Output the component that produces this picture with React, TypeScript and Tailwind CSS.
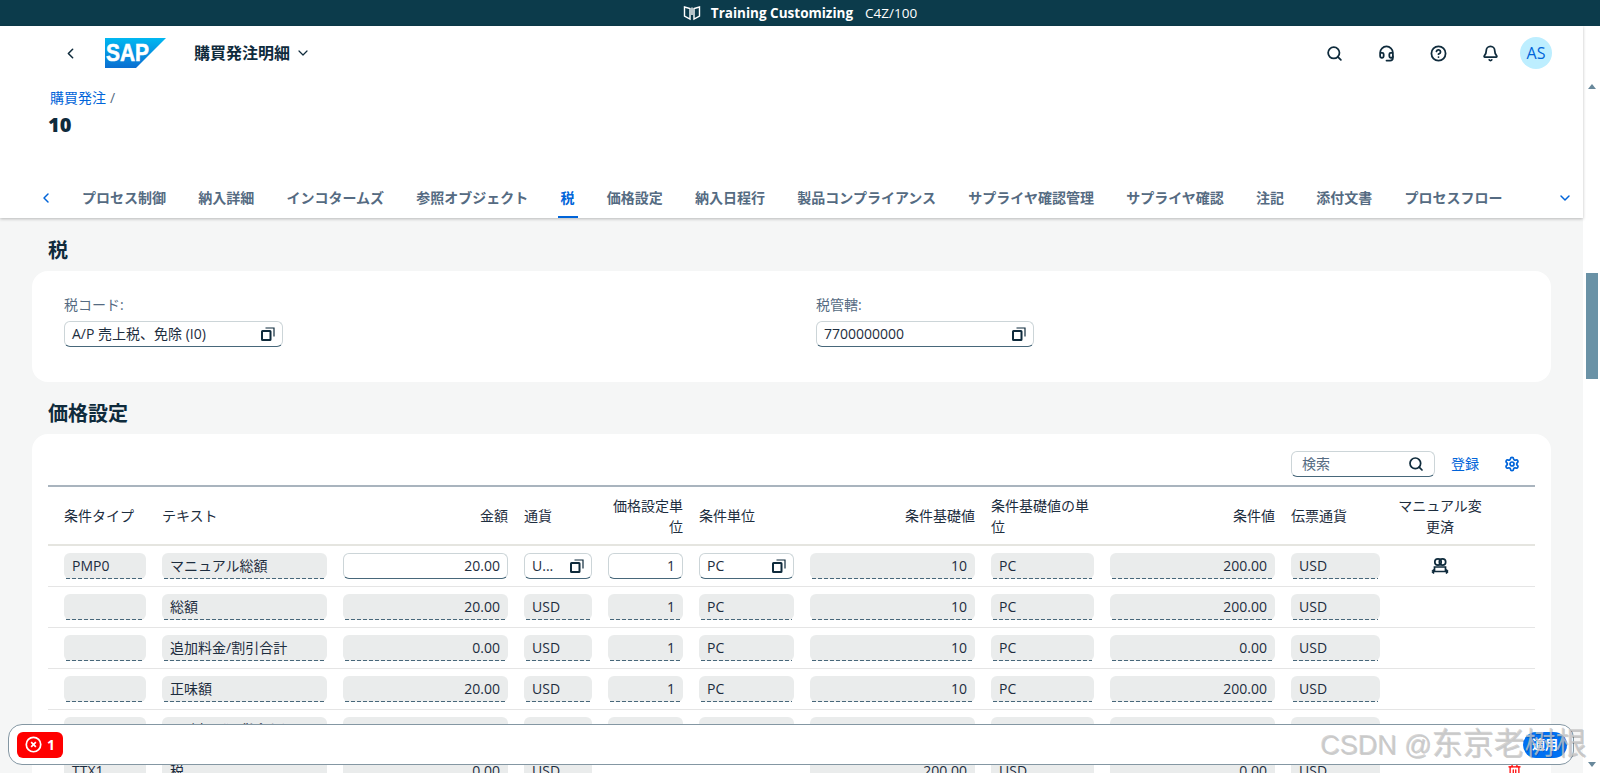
import { Bell, ChevronDown, ChevronLeft, CircleHelp, Headset, Search, Settings, Trash2 } from "lucide-react";

const FONT = "[font-family:'Open_Sans','Noto_Sans_CJK_JP',sans-serif]";
const GRID =
  "grid grid-cols-[98px_181px_181px_84px_91px_111px_181px_119px_181px_105px_147px] pl-2";

const TABS = [
  "プロセス制御",
  "納入詳細",
  "インコタームズ",
  "参照オブジェクト",
  "税",
  "価格設定",
  "納入日程行",
  "製品コンプライアンス",
  "サプライヤ確認管理",
  "サプライヤ確認",
  "注記",
  "添付文書",
  "プロセスフロー",
];

const HEADERS = [
  { label: "条件タイプ", cls: "" },
  { label: "テキスト", cls: "" },
  { label: "金額", cls: "justify-end text-right" },
  { label: "通貨", cls: "" },
  { label: "価格設定単位", cls: "justify-end text-right" },
  { label: "条件単位", cls: "" },
  { label: "条件基礎値", cls: "justify-end text-right" },
  { label: "条件基礎値の単位", cls: "" },
  { label: "条件値", cls: "justify-end text-right" },
  { label: "伝票通貨", cls: "" },
];

const ROWS = [
  ["", "総額", "20.00", "USD", "1", "PC", "10", "PC", "200.00", "USD"],
  ["", "追加料金/割引合計", "0.00", "USD", "1", "PC", "10", "PC", "0.00", "USD"],
  ["", "正味額", "20.00", "USD", "1", "PC", "10", "PC", "200.00", "USD"],
  ["", "正味額（通貨含む）", "20.00", "USD", "1", "PC", "10", "PC", "200.00", "USD"],
  ["TTX1", "税", "0.00", "USD", null, null, "200.00", "USD", "0.00", "USD"],
];

function ValueHelpIcon() {
  return (
    <svg width="14" height="14" viewBox="0 0 14 14" fill="none" className="shrink-0 text-[#0f2b3c]">
      <rect x="1" y="4" width="8.5" height="9" rx="0.5" stroke="currentColor" strokeWidth="2" />
      <path d="M4.5 1H13V9.5" stroke="currentColor" strokeWidth="1.2" />
    </svg>
  );
}

function ReadOnlyCell({ value, right }: { value: string; right?: boolean }) {
  return (
    <div className="flex h-[26px] flex-col rounded-md bg-[#eaecec] text-sm text-[#1d2d3e]">
      <div className={`flex flex-1 items-center px-2 ${right ? "justify-end" : ""}`}>{value}</div>
      <div className="mx-0.5 h-px bg-[repeating-linear-gradient(90deg,#47677a_0_4px,transparent_4px_6px)]" />
    </div>
  );
}

function InputCell({ value, right, help }: { value: string; right?: boolean; help?: boolean }) {
  return (
    <div
      className={`flex h-[26px] items-center justify-between gap-1 rounded-md border border-[#ccd5d8] border-b-[#47677a] bg-white px-[7px] text-sm text-[#1d2d3e] ${
        right ? "text-right" : ""
      }`}
    >
      <span className="min-w-0 flex-1">{value}</span>
      {help && <ValueHelpIcon />}
    </div>
  );
}

function Field({ label, value, width }: { label: string; value: string; width: string }) {
  return (
    <div className={width}>
      <div className="mb-[6px] h-[20px] text-sm leading-5 text-[#556b82]">{label}</div>
      <InputCell value={value} help />
    </div>
  );
}

function SapLogo() {
  return (
    <svg width="61" height="30" viewBox="0 0 61 30">
      <defs>
        <linearGradient id="sapFill" x1="0" y1="0" x2="0" y2="1">
          <stop offset="0" stopColor="#00b8f1" />
          <stop offset="1" stopColor="#0a6ed1" />
        </linearGradient>
      </defs>
      <polygon points="0,0 61,0 31,30 0,30" fill="url(#sapFill)" />
      <text
        x="1"
        y="23"
        fill="#fff"
        stroke="#fff"
        strokeWidth="0.6"
        fontSize="24"
        fontWeight="700"
        fontFamily="'Liberation Sans', sans-serif"
        textLength="43"
        lengthAdjust="spacingAndGlyphs"
      >
        SAP
      </text>
    </svg>
  );
}

export default function App() {
  return (
    <div className={`h-[773px] w-[1600px] overflow-hidden bg-white ${FONT} relative`}>
      {/* shell bar */}
      <div className="flex h-[26px] items-center justify-center bg-[#0c3b4b] text-[13.5px] text-white">
        <svg width="18" height="16" viewBox="0 0 18 16" fill="none" stroke="#fff" strokeWidth="1.4" className="mr-[10px]">
          <path d="M1.5 2 L7 3.5 V14 L1.5 11 Z" />
          <path d="M16.5 2 L11 3.5 V14 L16.5 11 Z" />
          <path d="M9 2.5 V10" />
        </svg>
        <span className="font-bold">Training Customizing</span>
        <span className="ml-3">C4Z/100</span>
      </div>

      <div className="flex h-[747px]">
        <div className="w-[1583px] shrink-0">
          {/* header */}
          <header className="relative z-10 bg-white shadow-[0_1px_3px_rgba(0,0,0,0.25)]">
            <div className="flex h-[54px] items-center pl-[62px] pr-[31px]">
              <ChevronLeft size={17} strokeWidth={2.2} className="text-[#0f2b3c]" />
              <div className="ml-[26px]">
                <SapLogo />
              </div>
              <span className="ml-7 text-base font-bold text-[#0f2b3c]">購買発注明細</span>
              <ChevronDown size={16} strokeWidth={1.8} className="ml-[5px] text-[#0f2b3c]" />
              <div className="ml-auto flex items-center text-[#0f2b3c]">
                <Search size={17} strokeWidth={2.5} />
                <Headset size={17} strokeWidth={2.5} className="ml-[35px]" />
                <CircleHelp size={17} strokeWidth={2.5} className="ml-[35px]" />
                <Bell size={17} strokeWidth={2.5} className="ml-[35px]" />
                <div className="ml-[21px] flex h-8 w-8 items-center justify-center rounded-full bg-[#bdeeff] text-base text-[#0064d9]">
                  AS
                </div>
              </div>
            </div>
            <div className="h-[21px] pl-[50px] pt-[8px] text-sm leading-[20px]">
              <span className="text-[#0064d9]">購買発注</span>
              <span className="ml-1 text-[#556b82]">/</span>
            </div>
            <div className="mt-[3px] h-[63px] pl-12 pt-[9px] text-xl font-extrabold leading-[24px] text-[#0f2b3c]">10</div>
            <div className="flex h-[51px] items-center pt-[10px]">
              <ChevronLeft size={16} strokeWidth={2.2} className="ml-[38px] mr-[28px] text-[#0064d9]" />
              <nav className="flex h-full items-center gap-[32.25px]">
                {TABS.map((tab) => (
                  <div
                    key={tab}
                    className={`relative flex h-full items-center text-sm font-semibold ${
                      tab === "税" ? "text-[#0064d9]" : "text-[#556b82]"
                    }`}
                  >
                    {tab}
                    {tab === "税" && (
                      <span className="absolute -inset-x-[3px] bottom-0 h-[2px] bg-[#0064d9]" />
                    )}
                  </div>
                ))}
              </nav>
              <ChevronDown size={16} strokeWidth={2.2} className="ml-[54px] text-[#0064d9]" />
            </div>
          </header>

          {/* content */}
          <main className="h-[555px] overflow-hidden bg-[#f5f6f6] pl-8 pr-8">
            <h2 className="flex h-[53px] items-center pl-4 pt-3 text-xl font-bold text-[#0f2b3c]">税</h2>
            <section className="flex h-[111px] rounded-2xl bg-white pl-8 pt-6">
              <Field label="税コード:" value="A/P 売上税、免除 (I0)" width="w-[219px]" />
              <div className="w-[533px]" />
              <Field label="税管轄:" value="7700000000" width="w-[218px]" />
            </section>
            <h2 className="flex h-[52px] items-center pl-4 pt-3 text-xl font-bold text-[#0f2b3c]">価格設定</h2>
            <section className="rounded-2xl bg-white pl-4 pr-4 pb-4">
              <div className="flex h-[51px] items-end justify-end pb-2">
                <div className="flex h-[26px] w-[144px] items-center justify-between rounded-md border border-[#ccd5d8] border-b-[#47677a] px-2.5 text-sm text-[#556b82]">
                  検索
                  <Search size={16} strokeWidth={2.6} className="text-[#0f2b3c]" />
                </div>
                <span className="ml-4 flex h-[26px] items-center text-sm text-[#0064d9]">登録</span>
                <Settings size={16} strokeWidth={2.6} className="mb-[5px] ml-[25px] mr-[15px] text-[#0064d9]" />
              </div>
              <div className="border-t-2 border-[#a9b4be]">
                <div className={`${GRID} h-[59px] border-b-2 border-[#e5e5e0]`}>
                  {HEADERS.map((h) => (
                    <div key={h.label} className={`flex items-center px-2 text-sm leading-[21px] text-[#1d2d3e] ${h.cls}`}>
                      <span>{h.label}</span>
                    </div>
                  ))}
                  <div className="flex items-center px-2 text-sm leading-[21px] text-[#1d2d3e]">
                    <span className="w-[88px] text-center">マニュアル変更済</span>
                  </div>
                </div>

                <div className={`${GRID} h-[41px] items-start border-b border-[#e5e5e5] pt-[7px]`}>
                  <div className="px-2"><ReadOnlyCell value="PMP0" /></div>
                  <div className="px-2"><ReadOnlyCell value="マニュアル総額" /></div>
                  <div className="px-2"><InputCell value="20.00" right /></div>
                  <div className="px-2"><InputCell value="U..." help /></div>
                  <div className="px-2"><InputCell value="1" right /></div>
                  <div className="px-2"><InputCell value="PC" help /></div>
                  <div className="px-2"><ReadOnlyCell value="10" right /></div>
                  <div className="px-2"><ReadOnlyCell value="PC" /></div>
                  <div className="px-2"><ReadOnlyCell value="200.00" right /></div>
                  <div className="px-2"><ReadOnlyCell value="USD" /></div>
                  <div className="flex w-[104px] justify-center px-2 pt-1">
                    <svg width="18" height="18" viewBox="0 0 18 18" fill="none" stroke="#0f2b3c" strokeWidth="1.7">
                      <circle cx="7" cy="5" r="3.2" />
                      <circle cx="11.5" cy="5" r="3.2" />
                      <path d="M3.5 14 V10 H14.5 V14" />
                      <path d="M1 14.5 H17 M1 14.5 L3 12.5 M1 14.5 L3 16.5 M17 14.5 L15 12.5 M17 14.5 L15 16.5" />
                    </svg>
                  </div>
                </div>

                {ROWS.map((row, i) => (
                  <div key={i} className={`${GRID} h-[41px] items-start border-b border-[#e5e5e5] pt-[7px]`}>
                    {row.map((value, j) => {
                      const right = j === 2 || j === 4 || j === 6 || j === 8;
                      return (
                        <div key={j} className="px-2">
                          {value !== null && <ReadOnlyCell value={value} right={right} />}
                        </div>
                      );
                    })}
                    {row[0] === "TTX1" && (
                      <div className="flex justify-end pr-[13px] pt-[5px]">
                        <Trash2 size={15} className="text-[#ff0000]" />
                      </div>
                    )}
                  </div>
                ))}
              </div>
            </section>
          </main>
        </div>

        {/* scrollbar */}
        <div className="flex flex-1 flex-col items-center pl-px">
          <span className="mt-[58px] h-0 w-0 border-x-[4px] border-b-[5px] border-x-transparent border-b-[#68889b]" />
          <div className="mt-[184px] h-[106px] w-3 bg-[#6a92a6]" />
          <span className="mt-[383px] h-0 w-0 border-x-[4px] border-t-[5px] border-x-transparent border-t-[#68889b]" />
        </div>
      </div>

      {/* message bar, floats over the table */}
      <div className="absolute left-2 top-[724px] flex h-[41px] w-[1566px] items-center justify-between rounded-[14px] border border-[#8497a3] bg-white pl-2 pr-[6px]">
        <div className="flex h-[26px] w-[46px] items-center justify-center gap-[5px] rounded-md bg-[#ff0000] text-sm font-bold text-white">
          <svg width="17" height="17" viewBox="0 0 16 16" fill="none" stroke="#fff" strokeWidth="1.6">
            <circle cx="8" cy="8" r="6.8" />
            <path d="M5.8 5.8 L10.2 10.2 M10.2 5.8 L5.8 10.2" />
          </svg>
          1
        </div>
        <div className="flex h-[26px] w-[44px] items-center justify-center rounded-[13px] bg-[#0070f2] text-[13px] font-semibold text-white">
          適用
        </div>
      </div>

      {/* watermark */}
      <div className="pointer-events-none absolute left-[1320px] top-[724px] whitespace-nowrap text-[31px] leading-[40px] text-[#c8c8c8]/75 [font-family:'Liberation_Sans','Noto_Sans_CJK_SC',sans-serif] [text-shadow:1px_1px_0.5px_rgba(0,0,0,0.2)]">
        <span className="text-[27px]">CSDN @</span>东京老树根
      </div>
    </div>
  );
}
